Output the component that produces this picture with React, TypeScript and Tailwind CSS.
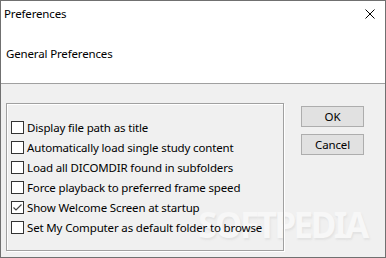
import React from "react";

const options = [
  { label: "Display file path as title", checked: false },
  { label: "Automatically load single study content", checked: false },
  { label: "Load all DICOMDIR found in subfolders", checked: false },
  { label: "Force playback to preferred frame speed", checked: false },
  { label: "Show Welcome Screen at startup", checked: true },
  { label: "Set My Computer as default folder to browse", checked: false },
];

const CheckBox = ({ checked }: { checked: boolean }) => (
  <div className="w-[13px] h-[13px] border border-[#333333] bg-white flex items-center justify-center shrink-0">
    {checked && (
      <svg width="11" height="11" viewBox="0 0 11 11">
        <path d="M1.5 5.5 L4 8 L9.5 2.5" fill="none" stroke="#444" strokeWidth="1.2" />
      </svg>
    )}
  </div>
);

const App: React.FC = () => {
  return (
    <div
      className="relative w-[386px] h-[258px] border border-[#707070] bg-[#f0f0f0] flex flex-col text-[11.5px] tracking-[-0.15px] text-black overflow-hidden"
      style={{ fontFamily: '"Noto Sans", "Open Sans", sans-serif' }}
    >
      {/* watermark, painted under the dialog content */}
      <div className="absolute left-[197px] top-[198px] text-[35px] font-bold text-[#f7f7f7] [text-shadow:1px_2px_2px_#e2e2e2] tracking-[-2.5px] pointer-events-none select-none">
        SOFTPEDIA
      </div>

      {/* Title bar */}
      <div className="relative z-10 h-[26px] bg-white flex items-center justify-between pl-[3px] pr-[10px]">
        <span>Preferences</span>
        <svg width="10" height="10" viewBox="0 0 10 10">
          <path d="M0.5 0.5 L9.5 9.5 M9.5 0.5 L0.5 9.5" stroke="#000" strokeWidth="1" />
        </svg>
      </div>

      {/* Header */}
      <div className="relative z-10 h-[57px] bg-white pl-[5px] pt-[18px] border-b border-[#a0a0a0]">
        <span>General Preferences</span>
      </div>

      {/* Body */}
      <div className="relative z-10 flex-1 flex">
        <div className="ml-[5px] mt-[19px] w-[278px] h-[148px] border border-[#a0a0a0] shadow-[inset_1px_1px_0_#fff,1px_1px_0_#fff] pl-[4px] pt-[17px] flex flex-col">
          {options.map((opt) => (
            <div key={opt.label} className="h-[20px] flex items-start gap-[3px]">
              <CheckBox checked={opt.checked} />
              <span className="leading-[13px]">{opt.label}</span>
            </div>
          ))}
        </div>

        <div className="ml-[17px] mt-[22px] flex flex-col gap-[7px]">
          <button className="w-[63px] h-[21px] bg-[#e1e1e1] border border-[#adadad] leading-none">OK</button>
          <button className="w-[63px] h-[21px] bg-[#e1e1e1] border border-[#adadad] leading-none">Cancel</button>
        </div>
      </div>
    </div>
  );
};

export default App;
